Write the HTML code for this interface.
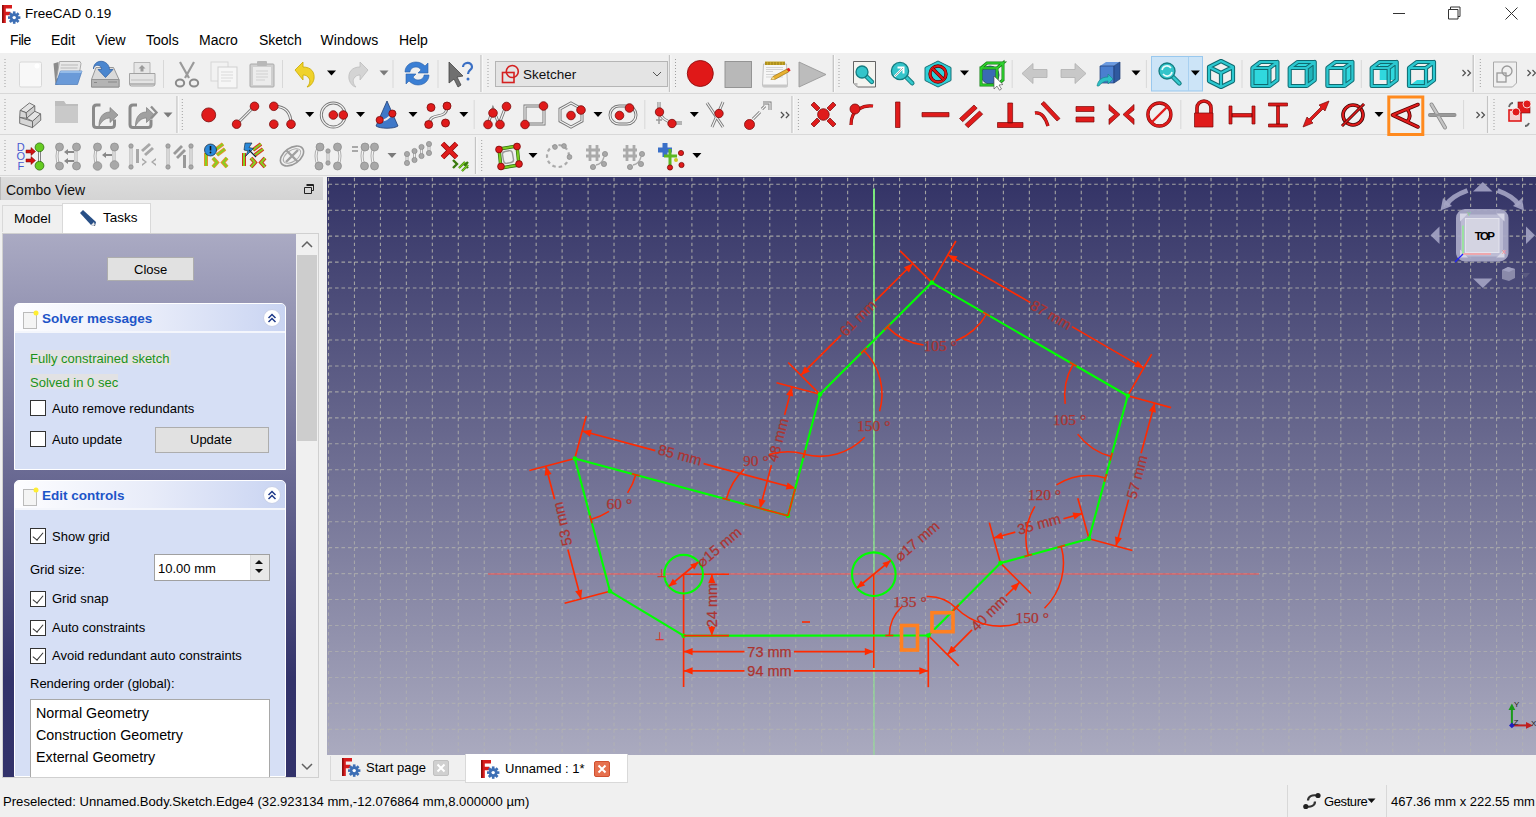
<!DOCTYPE html>
<html><head><meta charset="utf-8">
<style>
*{margin:0;padding:0;box-sizing:border-box}
html,body{width:1536px;height:817px;overflow:hidden;background:#f0f0f0;font-family:"Liberation Sans",sans-serif;font-size:13px;color:#000}
.a{position:absolute}
.t{position:absolute;white-space:nowrap;line-height:1}
#title{left:0;top:0;width:1536px;height:30px;background:#fff}
#menu{left:0;top:30px;width:1536px;height:23px;background:#fff}
#tb{left:0;top:53px;width:1536px;height:124px;background:#f0f0f0}
#view{left:327px;top:177px;width:1209px;height:578px}
.cb{position:absolute;width:16px;height:16px;background:#fff;border:1px solid #333}
.chk::after{content:"";position:absolute;left:4px;top:1px;width:5px;height:9px;border:solid #333;border-width:0 1.3px 1.3px 0;transform:rotate(40deg)}
.btn{position:absolute;background:#e1e1e1;border:1px solid #adadad;text-align:center}
</style></head><body>
<div id="title" class="a">
  <svg class="a" style="left:1px;top:4px" width="20" height="20" viewBox="0 0 20 20"><path d="M1 1h10v3.6H4.8v3.2h4.6v3.4H4.8V19H1z" fill="#d61c1c"/><path d="M1 1h1.6v18H1z" fill="#8e0c0c"/><g transform="translate(13.2,13.6)" fill="#3d6fb5"><circle r="4.4"/><rect x="-1.3" y="-6.2" width="2.6" height="12.4"/><rect x="-6.2" y="-1.3" width="12.4" height="2.6"/><rect x="-1.3" y="-6.2" width="2.6" height="12.4" transform="rotate(45)"/><rect x="-1.3" y="-6.2" width="2.6" height="12.4" transform="rotate(-45)"/><circle r="1.7" fill="#fff"/></g></svg>
  <div class="t" style="left:25px;top:7px;font-size:13.5px;color:#000">FreeCAD 0.19</div>
  <svg class="a" style="left:1380px;top:0" width="156" height="28">
    <path d="M13 13.5h12" stroke="#333" stroke-width="1"/>
    <path d="M68.5 9.5h9.5v9.5h-9.5z M70.5 9.5v-2.5h9.5v9.5h-2" stroke="#333" stroke-width="1" fill="none"/>
    <path d="M125.5 7.5l12 12M137.5 7.5l-12 12" stroke="#333" stroke-width="1"/>
  </svg>
</div>
<div id="menu" class="a">
  <div class="t" style="left:10px;top:3.3px;font-size:14px;letter-spacing:-0.4px">File</div>
  <div class="t" style="left:51px;top:3.3px;font-size:14px">Edit</div>
  <div class="t" style="left:95.5px;top:3.3px;font-size:14px">View</div>
  <div class="t" style="left:146px;top:3.3px;font-size:14px">Tools</div>
  <div class="t" style="left:199px;top:3.3px;font-size:14px">Macro</div>
  <div class="t" style="left:259px;top:3.3px;font-size:14px">Sketch</div>
  <div class="t" style="left:320.5px;top:3.3px;font-size:14px;letter-spacing:0.15px">Windows</div>
  <div class="t" style="left:399px;top:3.3px;font-size:14px">Help</div>
</div>
<div id="tb" class="a">
  <div class="a" style="left:0;top:40px;width:1536px;height:1px;background:#d8d8d8"></div>
  <div class="a" style="left:0;top:81px;width:1536px;height:1px;background:#d8d8d8"></div>
  <div class="a" style="left:0;top:122px;width:1536px;height:1px;background:#d8d8d8"></div>
</div>
<svg class="a" style="left:0;top:53px" width="1536" height="124" viewBox="0 53 1536 124"><line x1="5" y1="59" x2="5" y2="89" stroke="#a0a0a0" stroke-width="1" stroke-dasharray="1 2"/>
<rect x="19.5" y="62" width="22" height="25" rx="1.5" fill="#f8f8f8" stroke="#d8d8d8"/><circle cx="37" cy="66" r="2.5" fill="#fff"/>
<path d="M53.5 63.5l5 -1.5v22.5l-3 0.5z" fill="#8c8c8c"/><path d="M59.5 61.5h20.5l1 2-2.5 15h-22z" fill="#e8e8e8" stroke="#9a9a9a" stroke-width="0.8"/><path d="M61 65h17M60.5 68h17" stroke="#b8b8b8" stroke-width="1"/>
<path d="M60.5 71h21.5l-4.5 13.5H55.5z" fill="#6a9ad8" stroke="#4a78b8" stroke-width="0.7"/><path d="M60.5 71h21.5l-0.6 2H59.9z" fill="#94bbe8"/>
<path d="M96 67.5h17.5l5.5 12v7.5H91.5v-7.5z" fill="#dadada" stroke="#8e8e8e" stroke-width="0.9"/><path d="M91.5 79.5h27.5v7.5H91.5z" fill="#b4b4b4" stroke="#8e8e8e" stroke-width="0.9"/><path d="M108 82h9M94 82.5h3" stroke="#888" stroke-width="1"/>
<path d="M93.5 69c0-6 5-8.5 9.5-7.5 4 1 6.5 4.5 6.5 8h3.5l-7.5 8-7.5-8h3.5c0-2.5-1.5-4-3.5-4.2-2.5-.3-4.5 1.5-4.5 3.7z" fill="#4a86cf" stroke="#2a5a9e" stroke-width="0.7"/>
<path d="M134 62.5h16v11h-16z" fill="#e6e6e6" stroke="#a8a8a8" stroke-width="0.8"/><path d="M142 65l3.5 3.5h-2v3h-3v-3h-2z" fill="#9a9a9a"/><path d="M129.5 73.5h25.5v10.5q0 2-2 2h-21.5q-2 0-2-2z" fill="#e4e4e4" stroke="#9c9c9c" stroke-width="0.9"/><path d="M131 80h22" stroke="#c4c4c4" stroke-width="1.2"/><path d="M130 84h25" stroke="#aaa" stroke-width="1.5"/>
<line x1="163.5" y1="60" x2="163.5" y2="88" stroke="#d8d8d8" stroke-width="1"/>
<path d="M180 62l9 16M194 62l-9 16" stroke="#9a9a9a" stroke-width="2.2"/><ellipse cx="180" cy="83" rx="4.2" ry="3.5" fill="none" stroke="#8a8a8a" stroke-width="2"/><ellipse cx="194" cy="83" rx="4.2" ry="3.5" fill="none" stroke="#8a8a8a" stroke-width="2"/>
<rect x="211" y="62" width="17" height="19" fill="#f2f2f2" stroke="#d6d6d6"/><rect x="218" y="67" width="19" height="21" fill="#f6f6f6" stroke="#cfcfcf"/><path d="M221 72h12M221 75h12M221 78h12M221 81h10" stroke="#dadada"/>
<rect x="250" y="64" width="24" height="23" rx="1" fill="#cfcfcf" stroke="#aaa"/><rect x="253" y="67" width="18" height="18" fill="#ececec"/><rect x="257" y="61" width="10" height="5" rx="1" fill="#b8b8b8"/><path d="M256 71h12M256 74h12M256 77h12M256 80h9" stroke="#d0d0d0"/>
<line x1="282.5" y1="60" x2="282.5" y2="88" stroke="#d8d8d8" stroke-width="1"/>
<path d="M295 70l8-8v5c8 0 12 5 11 12-1 5-5 8-7 8 3-3 4-7 1-10-2-2-4-2-5-2v5z" fill="#f0d22a" stroke="#c8a800" stroke-width="0.8"/>
<polygon points="327.0,70.5 336.0,70.5 331.5,75.5" fill="#000"/>
<path d="M368 70l-8-8v5c-8 0-12 5-11 12 1 5 5 8 7 8-3-3-4-7-1-10 2-2 4-2 5-2v5z" fill="#d4d4d4" stroke="#bdbdbd" stroke-width="0.8"/>
<polygon points="379.5,70.5 388.5,70.5 384,75.5" fill="#7a7a7a"/>
<line x1="393" y1="60" x2="393" y2="88" stroke="#d8d8d8" stroke-width="1"/>
<path d="M405 72c0-6 5-10 11-10 4 0 7 2 9 4l3-3v10h-10l3-3c-1-2-3-3-5-3-4 0-6 3-6 5z" fill="#3b7fd4" stroke="#2a5fa8" stroke-width="0.6"/><path d="M429 75c0 6-5 10-11 10-4 0-7-2-9-4l-3 3V74h10l-3 3c1 2 3 3 5 3 4 0 6-3 6-5z" fill="#3b7fd4" stroke="#2a5fa8" stroke-width="0.6"/>
<line x1="438" y1="60" x2="438" y2="88" stroke="#d8d8d8" stroke-width="1"/>
<path d="M449 62l14 14-6 1 4 8-3 2-4-8-5 4z" fill="#707070" stroke="#444" stroke-width="0.8"/><path d="M463 67c0-5 9-6 9 0 0 3-4 3-4 7" fill="none" stroke="#3a6fc4" stroke-width="2.2"/><circle cx="468" cy="79" r="1.5" fill="#3a6fc4"/>
<line x1="481" y1="55" x2="481" y2="92" stroke="#c4c4c4" stroke-width="1.3"/><line x1="482.3" y1="55" x2="482.3" y2="92" stroke="#fafafa" stroke-width="1"/>
<line x1="488" y1="59" x2="488" y2="89" stroke="#a0a0a0" stroke-width="1" stroke-dasharray="1 2"/>
<rect x="495.5" y="61.5" width="172" height="25" fill="#e4e4e4" stroke="#b5b5b5"/>
<rect x="502.5" y="72.5" width="11.5" height="10" fill="none" stroke="#d42020" stroke-width="1.6"/><circle cx="512.3" cy="71.5" r="6" fill="none" stroke="#d42020" stroke-width="1.6"/>
<text x="523" y="78.5" font-size="13.5" font-family="Liberation Sans" fill="#111">Sketcher</text>
<path d="M653 72l4 4 4-4" fill="none" stroke="#555" stroke-width="1"/>
<line x1="669.5" y1="55" x2="669.5" y2="92" stroke="#c4c4c4" stroke-width="1.3"/><line x1="670.8" y1="55" x2="670.8" y2="92" stroke="#fafafa" stroke-width="1"/>
<line x1="675.5" y1="59" x2="675.5" y2="89" stroke="#a0a0a0" stroke-width="1" stroke-dasharray="1 2"/>
<circle cx="700.3" cy="73.5" r="13" fill="#e01818" stroke="#8e0c0c" stroke-width="0.9"/>
<rect x="725" y="61.5" width="26.5" height="26" fill="#b8b8b8" stroke="#8e8e8e" stroke-width="0.9"/>
<path d="M763.5 64h23l1 21.5q0 1.5-1.5 1.5h-22q-1.5 0-1.5-1.5z" fill="#f6f6f6" stroke="#b4b4b4" stroke-width="0.8"/><path d="M763 84.5h24.5v2.5h-24.5z" fill="#c8c8c8"/><path d="M765 61.5h20v3.5h-20z" fill="#c8a828"/><path d="M766 62v3M769 62v3M772 62v3M775 62v3M778 62v3M781 62v3M784 62v3" stroke="#8a7010" stroke-width="0.8"/><path d="M766 67.5h17M766 69.5h17M766 71.5h7M766 74.5h17M766 77h17" stroke="#d0d0d0" stroke-width="0.9"/>
<path d="M771 79.5l2-3 14-7.5 1.8 2.8-14 7.7z" fill="#e8b030" stroke="#8a6000" stroke-width="0.6"/><path d="M786.5 69l2.5-1.2 1.6 2.8-1.8 1.2z" fill="#e02020"/><path d="M771 79.5l2-3 1.8 2.9z" fill="#f0d890"/>
<path d="M799 62v25l27-12.5z" fill="#bcbcbc" stroke="#9a9a9a" stroke-width="0.9"/>
<line x1="833.3" y1="55" x2="833.3" y2="92" stroke="#c4c4c4" stroke-width="1.3"/><line x1="834.5999999999999" y1="55" x2="834.5999999999999" y2="92" stroke="#fafafa" stroke-width="1"/>
<line x1="839" y1="59" x2="839" y2="89" stroke="#a0a0a0" stroke-width="1" stroke-dasharray="1 2"/>
<path d="M853.5 61.5h22v25.5h-18l-4-4z" fill="#f4f4f0" stroke="#555" stroke-width="0.9"/><path d="M853.5 83l4 4v-4z" fill="#bbb"/>
<line x1="865.3" y1="75.3" x2="871.8" y2="81.8" stroke="#137c80" stroke-width="4.6" stroke-linecap="round"/><line x1="865.3" y1="75.3" x2="871.8" y2="81.8" stroke="#34c8cc" stroke-width="2.6" stroke-linecap="round"/><circle cx="862" cy="72" r="6" fill="#34c4ca" stroke="#137c80" stroke-width="1.3"/>
<line x1="904.73" y1="75.73" x2="912.23" y2="83.23" stroke="#137c80" stroke-width="4.6" stroke-linecap="round"/><line x1="904.73" y1="75.73" x2="912.23" y2="83.23" stroke="#34c8cc" stroke-width="2.6" stroke-linecap="round"/><circle cx="900" cy="71" r="8.6" fill="#34c4ca" stroke="#137c80" stroke-width="1.3"/><path d="M894.5 76.5l8.5-8.5M897.5 67.5h6v6" stroke="#fff" stroke-width="2" fill="none"/><path d="M894.5 76.5l8.5-8.5" stroke="#555" stroke-width="0.5"/>
<polygon points="938,61 951,67.5 951,80.5 938,87 925,80.5 925,67.5" fill="#30d0d8" stroke="#1a6f74" stroke-width="1"/><circle cx="938" cy="74" r="8" fill="none" stroke="#5a0000" stroke-width="3.4"/><circle cx="938" cy="74" r="8" fill="none" stroke="#e01818" stroke-width="2.2"/><line x1="932.5" y1="68.5" x2="943.5" y2="79.5" stroke="#5a0000" stroke-width="3.4"/><line x1="932.5" y1="68.5" x2="943.5" y2="79.5" stroke="#e01818" stroke-width="2.2"/>
<polygon points="960.0,70.5 969.0,70.5 964.5,75.5" fill="#000"/>
<circle cx="990" cy="75" r="9" fill="#3a6ab4" stroke="#1d3a70" stroke-width="0.8"/><path d="M981 68h16v17h-16z M981 68l6-5h16l-6 5M997 68l6-5v17l-6 5" fill="none" stroke="#168016" stroke-width="3"/><path d="M981 68h16v17h-16z M981 68l6-5h16l-6 5M997 68l6-5v17l-6 5" fill="none" stroke="#2ed42e" stroke-width="1.6"/><path d="M994 76l9 8.5-4 0.5 2.5 4-2 1.2-2.5-4-3 2.8z" fill="#fff" stroke="#444" stroke-width="0.6"/>
<line x1="1012.2" y1="60" x2="1012.2" y2="88" stroke="#d8d8d8" stroke-width="1"/>
<path d="M1022 73.5l11-10v6h14v8h-14v6z" fill="#c8c8c8" stroke="#b0b0b0" stroke-width="0.8"/>
<path d="M1086 73.5l-11-10v6h-14v8h14v6z" fill="#c8c8c8" stroke="#b0b0b0" stroke-width="0.8"/>
<path d="M1100 66l6-4h14l-6 4z" fill="#6c9be0"/><path d="M1100 66h14v17h-14z" fill="#4a7fcf" stroke="#1f3d73" stroke-width="0.7"/><path d="M1114 66l6-4v17l-6 4z" fill="#2f5aa0" stroke="#1f3d73" stroke-width="0.7"/><path d="M1097 86c1-6 5-9 11-9v-3l5 5-5 5v-3c-4 0-7 2-9 5z" fill="#2cc0c6" stroke="#1a7f84" stroke-width="0.6"/>
<polygon points="1131.5,70.5 1140.5,70.5 1136,75.5" fill="#000"/>
<line x1="1146.4" y1="60" x2="1146.4" y2="88" stroke="#d8d8d8" stroke-width="1"/>
<rect x="1151.5" y="56.5" width="51" height="34.5" fill="#cce4f7" stroke="#99c8ee"/><line x1="1188.5" y1="57" x2="1188.5" y2="91" stroke="#a8d0f0"/>
<line x1="1171.4" y1="75.4" x2="1179.4" y2="83.4" stroke="#137c80" stroke-width="4.6" stroke-linecap="round"/><line x1="1171.4" y1="75.4" x2="1179.4" y2="83.4" stroke="#34c8cc" stroke-width="2.6" stroke-linecap="round"/><circle cx="1167" cy="71" r="8" fill="#34c4ca" stroke="#137c80" stroke-width="1.3"/><path d="M1162 70a5 5 0 0 1 9-2M1172 72a5 5 0 0 1-9 2" stroke="#eafcfc" stroke-width="1.6" fill="none"/>
<polygon points="1190.9,70.5 1199.9,70.5 1195.4,75.5" fill="#000"/>
<path d="M1221 61l12 6v14l-12 6-12-6V67z M1209 67l12 6 12-6M1221 73v14" fill="none" stroke="#0f6a70" stroke-width="4.2" stroke-linejoin="round"/><path d="M1221 61l12 6v14l-12 6-12-6V67z M1209 67l12 6 12-6M1221 73v14" fill="none" stroke="#2cc8d0" stroke-width="2.2" stroke-linejoin="round"/>
<line x1="1242" y1="60" x2="1242" y2="88" stroke="#d8d8d8" stroke-width="1"/>
<path d="M1252.4 68h17v18h-17z" fill="#30d8de"/>
<path d="M1252.4 68h17v18h-17z M1252.4 68l8-6h17l-8 6 M1269.4 68l8-6v18l-8 6" fill="none" stroke="#0f6a70" stroke-width="4.2" stroke-linejoin="round"/>
<path d="M1252.4 68h17v18h-17z M1252.4 68l8-6h17l-8 6 M1269.4 68l8-6v18l-8 6" fill="none" stroke="#2cc8d0" stroke-width="2.2" stroke-linejoin="round"/>
<path d="M1289.7 68l8-6h17l-8 6z" fill="#30d8de"/><path d="M1306.7 68l8-6v18l-8 6z" fill="#22b4ba"/>
<path d="M1289.7 68h17v18h-17z M1289.7 68l8-6h17l-8 6 M1306.7 68l8-6v18l-8 6" fill="none" stroke="#0f6a70" stroke-width="4.2" stroke-linejoin="round"/>
<path d="M1289.7 68h17v18h-17z M1289.7 68l8-6h17l-8 6 M1306.7 68l8-6v18l-8 6" fill="none" stroke="#2cc8d0" stroke-width="2.2" stroke-linejoin="round"/>
<path d="M1344.4 68l8-6v18l-8 6z" fill="#30d8de"/><path d="M1327.4 68h17v18h-17z" fill="#30d8de" fill-opacity="0.0"/>
<path d="M1327.4 68h17v18h-17z M1327.4 68l8-6h17l-8 6 M1344.4 68l8-6v18l-8 6" fill="none" stroke="#0f6a70" stroke-width="4.2" stroke-linejoin="round"/>
<path d="M1327.4 68h17v18h-17z M1327.4 68l8-6h17l-8 6 M1344.4 68l8-6v18l-8 6" fill="none" stroke="#2cc8d0" stroke-width="2.2" stroke-linejoin="round"/>
<line x1="1361.3" y1="60" x2="1361.3" y2="88" stroke="#d8d8d8" stroke-width="1"/>
<path d="M1379.7 62h17v18h-17z" fill="#30d8de"/>
<path d="M1371.7 68h17v18h-17z M1371.7 68l8-6h17l-8 6 M1388.7 68l8-6v18l-8 6" fill="none" stroke="#0f6a70" stroke-width="4.2" stroke-linejoin="round"/>
<path d="M1371.7 68h17v18h-17z M1371.7 68l8-6h17l-8 6 M1388.7 68l8-6v18l-8 6" fill="none" stroke="#2cc8d0" stroke-width="2.2" stroke-linejoin="round"/>
<path d="M1409 86l8-6h17l-8 6z" fill="#30d8de"/>
<path d="M1409 68h17v18h-17z M1409 68l8-6h17l-8 6 M1426 68l8-6v18l-8 6" fill="none" stroke="#0f6a70" stroke-width="4.2" stroke-linejoin="round"/>
<path d="M1409 68h17v18h-17z M1409 68l8-6h17l-8 6 M1426 68l8-6v18l-8 6" fill="none" stroke="#2cc8d0" stroke-width="2.2" stroke-linejoin="round"/>
<path d="M1462.5 70l3 3-3 3M1467.5 70l3 3-3 3" fill="none" stroke="#505050" stroke-width="1.2"/>
<line x1="1473.2" y1="55" x2="1473.2" y2="92" stroke="#c4c4c4" stroke-width="1.3"/><line x1="1474.5" y1="55" x2="1474.5" y2="92" stroke="#fafafa" stroke-width="1"/>
<line x1="1480.3" y1="59" x2="1480.3" y2="89" stroke="#a0a0a0" stroke-width="1" stroke-dasharray="1 2"/>
<path d="M1493.5 62h23v21l-4 4h-19z" fill="#f0f0f0" stroke="#aaa"/><rect x="1497" y="73" width="9" height="9" fill="none" stroke="#999" stroke-width="1.3"/><circle cx="1507" cy="71" r="5" fill="none" stroke="#999" stroke-width="1.3"/>
<path d="M1527.5 70l3 3-3 3M1532.5 70l3 3-3 3" fill="none" stroke="#505050" stroke-width="1.2"/>
<line x1="5" y1="99" x2="5" y2="130" stroke="#a0a0a0" stroke-width="1" stroke-dasharray="1 2"/>
<g stroke="#666" stroke-width="0.9" stroke-linejoin="round"><path d="M29.4 103L34.8 105.8L26.2 112.7L20.1 110.4z" fill="#e4e4e4"/><path d="M20.1 110.4L26.2 112.7L26.7 118.3L19.7 117.4z" fill="#d6d6d6"/><path d="M34.8 105.8L34.8 111.3L26.7 118.3L26.2 112.7z" fill="#cfcfcf"/><path d="M26.7 118.3L34.8 111.3L40.6 113.9L32.5 121.3z" fill="#e4e4e4"/><path d="M19.7 117.4L32.5 121.3L32.5 127.6L19.7 123.4z" fill="#d6d6d6"/><path d="M32.5 121.3L40.6 113.9L40.8 120.2L32.5 127.6z" fill="#cfcfcf"/></g>
<path d="M55 101h9l2 3h12v19H55z" fill="#bdbdbd"/><path d="M55 106h23v17H55z" fill="#c9c9c9"/>
<path d="M100.5 105.0h-4q-3 0-3 3v16.5q0 3 3 3h15q3 0 3-3v-5" fill="none" stroke="#8a8a8a" stroke-width="3"/><path d="M99.0 126.0c0-9 4-14 11-14v-4.5l8 7.5-8 7.5v-4.5c-5 0-8 3-11 8z" fill="#a0a0a0" stroke="#7e7e7e" stroke-width="0.7"/>
<path d="M137 105.0h-4q-3 0-3 3v16.5q0 3 3 3h15q3 0 3-3v-5" fill="none" stroke="#8a8a8a" stroke-width="3"/><path d="M135.5 126.0c0-9 4-14 11-14v-4.5l8 7.5-8 7.5v-4.5c-5 0-8 3-11 8z" fill="#a0a0a0" stroke="#7e7e7e" stroke-width="0.7"/>
<path d="M151 106.5l5.5 6-5.5 6" fill="none" stroke="#8e8e8e" stroke-width="2.4"/>
<polygon points="163.5,112.5 172.5,112.5 168,117.5" fill="#7a7a7a"/>
<line x1="177" y1="96" x2="177" y2="133" stroke="#c4c4c4" stroke-width="1.3"/><line x1="178.3" y1="96" x2="178.3" y2="133" stroke="#fafafa" stroke-width="1"/>
<line x1="182.3" y1="99" x2="182.3" y2="130" stroke="#a0a0a0" stroke-width="1" stroke-dasharray="1 2"/>
<circle cx="208.7" cy="114.9" r="7" fill="#e01b1b" stroke="#7a0a0a" stroke-width="0.8"/>
<path d="M236.6 124.2L254.5 106.3" fill="none" stroke="#777" stroke-width="3"/><path d="M236.6 124.2L254.5 106.3" fill="none" stroke="#f4f4f4" stroke-width="1.2"/>
<circle cx="236.6" cy="124.2" r="4.3" fill="#e01b1b" stroke="#7a0a0a" stroke-width="0.8"/>
<circle cx="254.5" cy="106.3" r="4.3" fill="#e01b1b" stroke="#7a0a0a" stroke-width="0.8"/>
<path d="M273.8 106.3Q291 106 291 124.2" fill="none" stroke="#777" stroke-width="3"/><path d="M273.8 106.3Q291 106 291 124.2" fill="none" stroke="#f4f4f4" stroke-width="1.2"/>
<circle cx="273.8" cy="106.3" r="4.3" fill="#e01b1b" stroke="#7a0a0a" stroke-width="0.8"/>
<circle cx="273.8" cy="124.2" r="4.3" fill="#e01b1b" stroke="#7a0a0a" stroke-width="0.8"/>
<circle cx="291" cy="124.2" r="4.3" fill="#e01b1b" stroke="#7a0a0a" stroke-width="0.8"/>
<polygon points="305.2,112.0 314.2,112.0 309.7,117.0" fill="#000"/>
<circle cx="333.3" cy="115" r="12" fill="none" stroke="#777" stroke-width="3"/><circle cx="333.3" cy="115" r="12" fill="none" stroke="#f4f4f4" stroke-width="1.2"/>
<circle cx="333.3" cy="115" r="4.3" fill="#e01b1b" stroke="#7a0a0a" stroke-width="0.8"/>
<circle cx="343.3" cy="115" r="4.3" fill="#e01b1b" stroke="#7a0a0a" stroke-width="0.8"/>
<polygon points="356.0,112.0 365.0,112.0 360.5,117.0" fill="#000"/>
<path d="M387 101l-11 25c4 3 18 3 22 0z" fill="#3f78c8" stroke="#1f3d73" stroke-width="0.8"/><path d="M379.7 120q6 2 12.7-6.4" stroke="#eee" stroke-width="2" fill="none"/>
<circle cx="379.7" cy="120" r="3.6" fill="#e01b1b" stroke="#7a0a0a" stroke-width="0.8"/>
<circle cx="392.4" cy="113.6" r="3.6" fill="#e01b1b" stroke="#7a0a0a" stroke-width="0.8"/>
<polygon points="408.5,112.0 417.5,112.0 413,117.0" fill="#000"/>
<path d="M428.7 124.2C431 110 446 122 447.3 106.3" fill="none" stroke="#777" stroke-width="3"/><path d="M428.7 124.2C431 110 446 122 447.3 106.3" fill="none" stroke="#f4f4f4" stroke-width="1.2"/>
<circle cx="431" cy="107.5" r="4" fill="#e01b1b" stroke="#7a0a0a" stroke-width="0.8"/>
<circle cx="447" cy="106" r="4" fill="#e01b1b" stroke="#7a0a0a" stroke-width="0.8"/>
<circle cx="428.7" cy="124.5" r="4" fill="#e01b1b" stroke="#7a0a0a" stroke-width="0.8"/>
<circle cx="445.5" cy="123" r="4" fill="#e01b1b" stroke="#7a0a0a" stroke-width="0.8"/>
<polygon points="459.3,112.0 468.3,112.0 463.8,117.0" fill="#000"/>
<line x1="474.2" y1="100" x2="474.2" y2="129" stroke="#d8d8d8" stroke-width="1"/>
<path d="M488 124l5-15 6 15 7-18" fill="none" stroke="#777" stroke-width="3"/><path d="M488 124l5-15 6 15 7-18" fill="none" stroke="#f4f4f4" stroke-width="1.2"/>
<circle cx="488" cy="124.5" r="4.3" fill="#e01b1b" stroke="#7a0a0a" stroke-width="0.8"/>
<circle cx="493" cy="113" r="4.3" fill="#e01b1b" stroke="#7a0a0a" stroke-width="0.8"/>
<circle cx="500" cy="124.5" r="4.3" fill="#e01b1b" stroke="#7a0a0a" stroke-width="0.8"/>
<circle cx="506.5" cy="106.5" r="4.3" fill="#e01b1b" stroke="#7a0a0a" stroke-width="0.8"/>
<path d="M525 124V106h19v18z" fill="none" stroke="#777" stroke-width="3"/><path d="M525 124V106h19v18z" fill="none" stroke="#f4f4f4" stroke-width="1.2"/>
<circle cx="525" cy="124.5" r="4.3" fill="#e01b1b" stroke="#7a0a0a" stroke-width="0.8"/>
<circle cx="543.5" cy="106" r="4.3" fill="#e01b1b" stroke="#7a0a0a" stroke-width="0.8"/>
<polygon points="571,103 582,109 582,121 571,127 560,121 560,109" fill="none" stroke="#777" stroke-width="3"/><polygon points="571,103 582,109 582,121 571,127 560,121 560,109" fill="none" stroke="#f4f4f4" stroke-width="1.2"/>
<circle cx="571" cy="115.5" r="4.3" fill="#e01b1b" stroke="#7a0a0a" stroke-width="0.8"/>
<circle cx="581" cy="110" r="4.3" fill="#e01b1b" stroke="#7a0a0a" stroke-width="0.8"/>
<polygon points="593.5,112.0 602.5,112.0 598,117.0" fill="#000"/>
<rect x="610" y="106" width="26" height="18" rx="9" fill="none" stroke="#777" stroke-width="3"/><rect x="610" y="106" width="26" height="18" rx="9" fill="none" stroke="#f4f4f4" stroke-width="1.2"/>
<circle cx="619.5" cy="115.5" r="4.3" fill="#e01b1b" stroke="#7a0a0a" stroke-width="0.8"/>
<circle cx="629.5" cy="108" r="4.3" fill="#e01b1b" stroke="#7a0a0a" stroke-width="0.8"/>
<line x1="644.8" y1="100" x2="644.8" y2="129" stroke="#d8d8d8" stroke-width="1"/>
<path d="M659 102v9q2 9 14 12h9" fill="none" stroke="#777" stroke-width="3"/><path d="M659 102v9q2 9 14 12h9" fill="none" stroke="#f4f4f4" stroke-width="1.2"/>
<circle cx="659.5" cy="112" r="4.2" fill="#e01b1b" stroke="#7a0a0a" stroke-width="0.8"/>
<circle cx="672" cy="123.5" r="4.2" fill="#e01b1b" stroke="#7a0a0a" stroke-width="0.8"/>
<path d="M656 120h6M659 117v7" stroke="#999" stroke-width="1.5"/>
<polygon points="689.8,112.0 698.8,112.0 694.3,117.0" fill="#000"/>
<path d="M712 127l11-25M707 103l16 24" fill="none" stroke="#777" stroke-width="3"/><path d="M712 127l11-25M707 103l16 24" fill="none" stroke="#f4f4f4" stroke-width="1.2"/>
<circle cx="719" cy="113.5" r="4.2" fill="#e01b1b" stroke="#7a0a0a" stroke-width="0.8"/>
<path d="M753 119l7-7M762 109l3-3M763 103h7v7" fill="none" stroke="#777" stroke-width="3"/><path d="M753 119l7-7M762 109l3-3M763 103h7v7" fill="none" stroke="#f4f4f4" stroke-width="1.2"/>
<circle cx="749.5" cy="124.5" r="5" fill="#e01b1b" stroke="#7a0a0a" stroke-width="0.8"/>
<path d="M780.9 112l3 3-3 3M785.9 112l3 3-3 3" fill="none" stroke="#505050" stroke-width="1.2"/>
<line x1="792" y1="96" x2="792" y2="133" stroke="#c4c4c4" stroke-width="1.3"/><line x1="793.3" y1="96" x2="793.3" y2="133" stroke="#fafafa" stroke-width="1"/>
<line x1="798.4" y1="99" x2="798.4" y2="130" stroke="#a0a0a0" stroke-width="1" stroke-dasharray="1 2"/>
<path d="M811 105l3-3 6 6-3 3z M836 105l-3-3-6 6 3 3z M811 124l3 3 6-6-3-3z M836 124l-3 3-6-6 3-3z" fill="#e01b1b" stroke="#7a0a0a" stroke-width="0.7"/>
<circle cx="823.4" cy="114.5" r="5.8" fill="#e01b1b" stroke="#7a0a0a" stroke-width="0.8"/>
<path d="M851 125q0-12 8-16q6-4 14-3" fill="none" stroke="#7a0a0a" stroke-width="3.2"/><path d="M851 125q0-12 8-16q6-4 14-3" fill="none" stroke="#e01b1b" stroke-width="2.2"/>
<circle cx="855" cy="109" r="5" fill="#e01b1b" stroke="#7a0a0a" stroke-width="0.8"/>
<path d="M895.5 102h4.5v25.5h-4.5z" fill="#e01b1b" stroke="#7a0a0a" stroke-width="0.7"/>
<path d="M922 112.5h27v4.3h-27z" fill="#e01b1b" stroke="#7a0a0a" stroke-width="0.7"/>
<path d="M959.5 118.5l14.5-13.5 3.2 3.2-14.5 13.5z M965 124.5l14.5-13.5 3.2 3.2-14.5 13.5z" fill="#e01b1b" stroke="#7a0a0a" stroke-width="0.7"/>
<path d="M997.5 122.5h25.5v5h-25.5z M1007.8 103h4.8v20h-4.8z" fill="#e01b1b" stroke="#7a0a0a" stroke-width="0.7"/>
<path d="M1035 113c6-1 10 3 13 13" fill="none" stroke="#7a0a0a" stroke-width="3.3"/><path d="M1035 113c6-1 10 3 13 13" fill="none" stroke="#e01b1b" stroke-width="2.2"/>
<path d="M1041 104l3-2.5 16 17-3 2.5z" fill="#e01b1b" stroke="#7a0a0a" stroke-width="0.7"/>
<path d="M1076 106.5h18v5h-18z M1076 117h18v5h-18z" fill="#e01b1b" stroke="#7a0a0a" stroke-width="0.7"/>
<path d="M1109 104.5l11 10-11 10v-5.5l5.5-4.5-5.5-4.5z M1134 104.5l-11 10 11 10v-5.5l-5.5-4.5 5.5-4.5z" fill="#e01b1b" stroke="#7a0a0a" stroke-width="0.7"/>
<circle cx="1159.4" cy="114.5" r="11.5" fill="none" stroke="#7a0a0a" stroke-width="3.4"/><circle cx="1159.4" cy="114.5" r="11.5" fill="none" stroke="#e01b1b" stroke-width="2.2"/><line x1="1151" y1="123" x2="1168" y2="106" stroke="#e01b1b" stroke-width="2.4"/>
<line x1="1180.8" y1="100" x2="1180.8" y2="129" stroke="#d8d8d8" stroke-width="1"/>
<path d="M1197 113v-5a7 7 0 0 1 14 0v5" fill="none" stroke="#7a0a0a" stroke-width="3.6"/><path d="M1197 113v-5a7 7 0 0 1 14 0v5" fill="none" stroke="#e01b1b" stroke-width="2.2"/>
<path d="M1194.5 113h18.5v14h-18.5z" fill="#e01b1b" stroke="#7a0a0a" stroke-width="0.7"/>
<path d="M1229 106h3v18h-3z M1252 106h3v18h-3z M1232 113.5h20v3.5h-20z" fill="#e01b1b" stroke="#7a0a0a" stroke-width="0.7"/>
<path d="M1268.5 103h19v3h-19z M1268.5 124h19v3h-19z M1276.5 106h3v18h-3z" fill="#e01b1b" stroke="#7a0a0a" stroke-width="0.7"/>
<path d="M1303 127l4-10 2 2 12-12-2-2 10-4-4 10-2-2-12 12 2 2z" fill="#e01b1b" stroke="#7a0a0a" stroke-width="0.7"/>
<circle cx="1353" cy="115" r="10" fill="none" stroke="#3a0000" stroke-width="3.6"/><circle cx="1353" cy="115" r="10" fill="none" stroke="#e01b1b" stroke-width="2"/><line x1="1342" y1="126" x2="1364" y2="104" stroke="#3a0000" stroke-width="3"/><line x1="1342" y1="126" x2="1364" y2="104" stroke="#e01b1b" stroke-width="1.6"/>
<polygon points="1374.5,112.0 1383.5,112.0 1379,117.0" fill="#000"/>
<rect x="1388.8" y="97" width="34" height="37.5" fill="none" stroke="#ff8a1e" stroke-width="3"/>
<path d="M1418 104.5L1392.5 115L1418 127M1407.5 109.5Q1412 115.5 1407.5 121.5" fill="none" stroke="#5a0000" stroke-width="3.6" stroke-linecap="round" stroke-linejoin="round"/><path d="M1418 104.5L1392.5 115L1418 127M1407.5 109.5Q1412 115.5 1407.5 121.5" fill="none" stroke="#e01b1b" stroke-width="2" stroke-linecap="round" stroke-linejoin="round"/>
<path d="M1431.5 104.5L1445 127.5M1430 115h24.5" fill="none" stroke="#8a8a8a" stroke-width="4" stroke-linecap="round"/><path d="M1431.5 104.5L1445 127.5" fill="none" stroke="#c4c4c4" stroke-width="2.4" stroke-linecap="round"/><path d="M1430 115h24.5" fill="none" stroke="#9a9a9a" stroke-width="2.6" stroke-linecap="round"/>
<line x1="1463.6" y1="100" x2="1463.6" y2="129" stroke="#d8d8d8" stroke-width="1"/>
<path d="M1476.5 112l3 3-3 3M1481.5 112l3 3-3 3" fill="none" stroke="#505050" stroke-width="1.2"/>
<line x1="1487.6" y1="96" x2="1487.6" y2="133" stroke="#c4c4c4" stroke-width="1.3"/><line x1="1488.8999999999999" y1="96" x2="1488.8999999999999" y2="133" stroke="#fafafa" stroke-width="1"/>
<line x1="1494" y1="99" x2="1494" y2="130" stroke="#a0a0a0" stroke-width="1" stroke-dasharray="1 2"/>
<rect x="1509" y="110" width="12" height="11" fill="#f4d0d0" stroke="#e01b1b" stroke-width="1.6"/><rect x="1518" y="102" width="12" height="11" fill="#e01b1b" stroke="#7a0a0a" stroke-width="0.6"/><circle cx="1527" cy="104" r="4" fill="#e01b1b" stroke="#fff" stroke-width="0.8"/><circle cx="1516" cy="112" r="4" fill="#e01b1b" stroke="#fff" stroke-width="0.8"/><path d="M1509 107q1-4 4-4M1529 123q-1 3-4 3" fill="none" stroke="#666" stroke-width="1.8"/>
<line x1="5" y1="140" x2="5" y2="171" stroke="#a0a0a0" stroke-width="1" stroke-dasharray="1 2"/>
<g font-family="Liberation Sans" font-size="11" fill="#4a5ad0" text-anchor="middle"><text x="20.8" y="151">D</text><text x="20.8" y="160">O</text><text x="20.8" y="169.5">F</text></g>
<path d="M26 150h5v-2.5l4.5 4-4.5 4v-2.5h-5z M26 159h5v-2.5l4.5 4-4.5 4v-2.5h-5z" fill="#d01010" stroke="#7a0000" stroke-width="0.5"/>
<path d="M39.5 147V166" fill="none" stroke="#777" stroke-width="3"/><path d="M39.5 147V166" fill="none" stroke="#f4f4f4" stroke-width="1.2"/>
<circle cx="39.5" cy="147.3" r="4.4" fill="#66cc22" stroke="#2e6e10" stroke-width="0.8"/><circle cx="39.5" cy="165.7" r="4.4" fill="#66cc22" stroke="#2e6e10" stroke-width="0.8"/>
<path d="M59 147q-4 9 0 19" fill="none" stroke="#aaa" stroke-width="3"/><path d="M59 147q-4 9 0 19" fill="none" stroke="#f4f4f4" stroke-width="1.2"/>
<path d="M76 147v19" fill="none" stroke="#aaa" stroke-width="3"/><path d="M76 147v19" fill="none" stroke="#f4f4f4" stroke-width="1.2"/>
<circle cx="59.5" cy="147" r="4" fill="#a8a8a8" stroke="#8a8a8a" stroke-width="0.7"/>
<circle cx="59.5" cy="166" r="4" fill="#a8a8a8" stroke="#8a8a8a" stroke-width="0.7"/>
<circle cx="76.5" cy="147" r="4" fill="#a8a8a8" stroke="#8a8a8a" stroke-width="0.7"/>
<circle cx="76.5" cy="166" r="4" fill="#a8a8a8" stroke="#8a8a8a" stroke-width="0.7"/>
<path d="M64 152l4-3v2h6v2h-6v2z" fill="#888"/>
<path d="M64 161l4-3v2h6v2h-6v2z" fill="#888"/>
<path d="M97 147q-4 9 0 19" fill="none" stroke="#aaa" stroke-width="3"/><path d="M97 147q-4 9 0 19" fill="none" stroke="#f4f4f4" stroke-width="1.2"/>
<path d="M114 147v19" fill="none" stroke="#aaa" stroke-width="3"/><path d="M114 147v19" fill="none" stroke="#f4f4f4" stroke-width="1.2"/>
<circle cx="97.5" cy="147" r="4" fill="#a8a8a8" stroke="#8a8a8a" stroke-width="0.7"/>
<circle cx="97.5" cy="166" r="4.3" fill="#a8a8a8" stroke="#8a8a8a" stroke-width="0.7"/>
<circle cx="114.5" cy="147" r="4" fill="#a8a8a8" stroke="#8a8a8a" stroke-width="0.7"/>
<circle cx="114.5" cy="165" r="4.3" fill="#a8a8a8" stroke="#8a8a8a" stroke-width="0.7"/>
<path d="M102 155l4-3v2h6v2h-6v2z" fill="#888"/>
<path d="M131 146v21" fill="none" stroke="#aaa" stroke-width="3"/><path d="M131 146v21" fill="none" stroke="#f4f4f4" stroke-width="1.2"/>
<circle cx="131" cy="146" r="2.2" fill="#a8a8a8" stroke="#8a8a8a" stroke-width="0.7"/>
<circle cx="131" cy="167" r="2.2" fill="#a8a8a8" stroke="#8a8a8a" stroke-width="0.7"/>
<path d="M136 149h3v14h-3z M141 150l8-7 2 2-8 7z M144 154l8-7 2 2-8 7z M142 158l5 4-5 4v-2l3-2-3-2z M156 158l-5 4 5 4v-2l-3-2 3-2z" fill="#a8a8a8"/>
<path d="M168 146v21" fill="none" stroke="#aaa" stroke-width="3"/><path d="M168 146v21" fill="none" stroke="#f4f4f4" stroke-width="1.2"/>
<path d="M191 146v21" fill="none" stroke="#aaa" stroke-width="3"/><path d="M191 146v21" fill="none" stroke="#f4f4f4" stroke-width="1.2"/>
<circle cx="168" cy="146" r="2.2" fill="#a8a8a8" stroke="#8a8a8a" stroke-width="0.7"/>
<circle cx="168" cy="167" r="2.2" fill="#a8a8a8" stroke="#8a8a8a" stroke-width="0.7"/>
<circle cx="191" cy="146" r="2.2" fill="#a8a8a8" stroke="#8a8a8a" stroke-width="0.7"/>
<circle cx="191" cy="167" r="2.2" fill="#a8a8a8" stroke="#8a8a8a" stroke-width="0.7"/>
<path d="M173 153l8-8 2 2-8 8z M176 157l8-8 2 2-8 8z M183 155h3v13h-3z" fill="#999"/>
<path d="M206 153v13M215 150l8-6M217 155l8-6M213 158l4 4.5-4 4.5M227 158l-4 4.5 4 4.5" fill="none" stroke="#e8902a" stroke-width="4"/><path d="M206 153v13M215 150l8-6M217 155l8-6M213 158l4 4.5-4 4.5M227 158l-4 4.5 4 4.5" fill="none" stroke="#86d020" stroke-width="2"/>
<circle cx="210.5" cy="150" r="6" fill="#2a88d8" stroke="#123" stroke-width="0.7"/><path d="M210.5 146v4.5" stroke="#111" stroke-width="1.6"/><circle cx="210.5" cy="152.5" r="0.9" fill="#111"/>
<path d="M244 153v13M253 150l8-6M255 155l8-6M251 158l4 4.5-4 4.5M265 158l-4 4.5 4 4.5" fill="none" stroke="#d83020" stroke-width="4"/><path d="M244 153v13M253 150l8-6M255 155l8-6M251 158l4 4.5-4 4.5M265 158l-4 4.5 4 4.5" fill="none" stroke="#86d020" stroke-width="2"/>
<path d="M245 143h7l-3 4.5 4.5 1-8 8 2.5-5.5-4-1z" fill="#2a88d8" stroke="#123" stroke-width="0.6"/><path d="M249 150l7 7" stroke="#123" stroke-width="1.2"/>
<ellipse cx="292" cy="156" rx="13" ry="8" transform="rotate(-35 292 156)" fill="none" stroke="#999" stroke-width="1.6"/><ellipse cx="292" cy="156" rx="10" ry="5.5" transform="rotate(-35 292 156)" fill="none" stroke="#aaa" stroke-width="1"/><path d="M286 150l12 12M298 150l-12 12" stroke="#a0a0a0" stroke-width="2.4"/>
<path d="M318 148q-4 8 0 17" fill="none" stroke="#aaa" stroke-width="3"/><path d="M318 148q-4 8 0 17" fill="none" stroke="#f4f4f4" stroke-width="1.2"/>
<path d="M338 148q4 8 0 17" fill="none" stroke="#aaa" stroke-width="3"/><path d="M338 148q4 8 0 17" fill="none" stroke="#f4f4f4" stroke-width="1.2"/>
<circle cx="320" cy="147" r="4" fill="#a8a8a8" stroke="#8a8a8a" stroke-width="0.7"/>
<circle cx="319" cy="166" r="4" fill="#a8a8a8" stroke="#8a8a8a" stroke-width="0.7"/>
<circle cx="337.5" cy="147" r="4" fill="#a8a8a8" stroke="#8a8a8a" stroke-width="0.7"/>
<circle cx="337.5" cy="166" r="4" fill="#a8a8a8" stroke="#8a8a8a" stroke-width="0.7"/>
<path d="M328 152v10" fill="none" stroke="#aaa" stroke-width="3"/><path d="M328 152v10" fill="none" stroke="#f4f4f4" stroke-width="1.2"/>
<circle cx="328" cy="151" r="2.2" fill="#a8a8a8" stroke="#8a8a8a" stroke-width="0.7"/>
<circle cx="328" cy="163" r="2.2" fill="#a8a8a8" stroke="#8a8a8a" stroke-width="0.7"/>
<path d="M352 147h6M352 151h6" stroke="#a8a8a8" stroke-width="2.2"/>
<path d="M364 148q-4 8 0 17" fill="none" stroke="#aaa" stroke-width="3"/><path d="M364 148q-4 8 0 17" fill="none" stroke="#f4f4f4" stroke-width="1.2"/>
<path d="M374 148q-4 8 0 17" fill="none" stroke="#aaa" stroke-width="3"/><path d="M374 148q-4 8 0 17" fill="none" stroke="#f4f4f4" stroke-width="1.2"/>
<circle cx="365" cy="147" r="4" fill="#a8a8a8" stroke="#8a8a8a" stroke-width="0.7"/>
<circle cx="364.5" cy="166" r="4" fill="#a8a8a8" stroke="#8a8a8a" stroke-width="0.7"/>
<circle cx="374.5" cy="147" r="4" fill="#a8a8a8" stroke="#8a8a8a" stroke-width="0.7"/>
<circle cx="374.5" cy="166" r="4" fill="#a8a8a8" stroke="#8a8a8a" stroke-width="0.7"/>
<polygon points="387.5,153.0 396.5,153.0 392,158.0" fill="#7a7a7a"/>
<path d="M407 154v8" fill="none" stroke="#aaa" stroke-width="3"/><path d="M407 154v8" fill="none" stroke="#f4f4f4" stroke-width="1.2"/>
<circle cx="407" cy="154" r="2.6" fill="#a8a8a8" stroke="#8a8a8a" stroke-width="0.7"/>
<circle cx="407" cy="163" r="2.6" fill="#a8a8a8" stroke="#8a8a8a" stroke-width="0.7"/>
<path d="M414.5 151v8" fill="none" stroke="#aaa" stroke-width="3"/><path d="M414.5 151v8" fill="none" stroke="#f4f4f4" stroke-width="1.2"/>
<circle cx="414.5" cy="151" r="2.6" fill="#a8a8a8" stroke="#8a8a8a" stroke-width="0.7"/>
<circle cx="414.5" cy="160" r="2.6" fill="#a8a8a8" stroke="#8a8a8a" stroke-width="0.7"/>
<path d="M421.5 147v8" fill="none" stroke="#aaa" stroke-width="3"/><path d="M421.5 147v8" fill="none" stroke="#f4f4f4" stroke-width="1.2"/>
<circle cx="421.5" cy="147" r="2.6" fill="#a8a8a8" stroke="#8a8a8a" stroke-width="0.7"/>
<circle cx="421.5" cy="156" r="2.6" fill="#a8a8a8" stroke="#8a8a8a" stroke-width="0.7"/>
<path d="M429 144v8" fill="none" stroke="#aaa" stroke-width="3"/><path d="M429 144v8" fill="none" stroke="#f4f4f4" stroke-width="1.2"/>
<circle cx="429" cy="144" r="2.6" fill="#a8a8a8" stroke="#8a8a8a" stroke-width="0.7"/>
<circle cx="429" cy="153" r="2.6" fill="#a8a8a8" stroke="#8a8a8a" stroke-width="0.7"/>
<path d="M442.5 143.5l14 14M456.5 143.5l-14 14" stroke="#8a0a0a" stroke-width="5"/><path d="M442.5 143.5l14 14M456.5 143.5l-14 14" stroke="#e01b1b" stroke-width="3.6"/><path d="M459 168l6-6M462 171l6-6M453 160l4 4-4 4M468 162l-3 3 3 3" fill="none" stroke="#3a7a10" stroke-width="2.4"/><path d="M459 168l6-6M462 171l6-6" stroke="#7ccc20" stroke-width="1.2"/>
<line x1="475.5" y1="137" x2="475.5" y2="174" stroke="#c4c4c4" stroke-width="1.3"/><line x1="476.8" y1="137" x2="476.8" y2="174" stroke="#fafafa" stroke-width="1"/>
<line x1="481.7" y1="140" x2="481.7" y2="171" stroke="#a0a0a0" stroke-width="1" stroke-dasharray="1 2"/>
<path d="M499 149l18-3 2 19-18 3z" fill="none" stroke="#2e6e10" stroke-width="3.4"/><path d="M499 149l18-3 2 19-18 3z" fill="none" stroke="#7ccc20" stroke-width="2"/><rect x="503" y="151" width="10" height="12" rx="3" transform="rotate(-10 508 157)" fill="none" stroke="#999" stroke-width="1.4"/>
<circle cx="499" cy="149.5" r="3.4" fill="#e01b1b" stroke="#7a0a0a" stroke-width="0.8"/>
<circle cx="517" cy="146.5" r="3.4" fill="#e01b1b" stroke="#7a0a0a" stroke-width="0.8"/>
<circle cx="501" cy="166.5" r="3.4" fill="#e01b1b" stroke="#7a0a0a" stroke-width="0.8"/>
<circle cx="519" cy="164" r="3.4" fill="#e01b1b" stroke="#7a0a0a" stroke-width="0.8"/>
<polygon points="528.5,153.0 537.5,153.0 533,158.0" fill="#000"/>
<circle cx="558" cy="156" r="11" fill="none" stroke="#aaa" stroke-width="2.2" stroke-dasharray="3.5 3"/>
<circle cx="555" cy="147" r="2.4" fill="#a8a8a8" stroke="#8a8a8a" stroke-width="0.7"/>
<circle cx="564" cy="146" r="2.4" fill="#a8a8a8" stroke="#8a8a8a" stroke-width="0.7"/>
<circle cx="569.5" cy="157" r="2.4" fill="#a8a8a8" stroke="#8a8a8a" stroke-width="0.7"/>
<path d="M586 150h14M586 156h14M590 145v16M597 145v16" stroke="#aaa" stroke-width="2.8"/><path d="M596 165q6-1 8-8" stroke="#aaa" stroke-width="1.4" fill="none"/>
<circle cx="605" cy="154" r="2.6" fill="#a8a8a8" stroke="#8a8a8a" stroke-width="0.7"/>
<circle cx="604" cy="164" r="2.6" fill="#a8a8a8" stroke="#8a8a8a" stroke-width="0.7"/>
<circle cx="593" cy="167" r="2.6" fill="#a8a8a8" stroke="#8a8a8a" stroke-width="0.7"/>
<path d="M623 150h14M623 156h14M627 145v16M634 145v16" stroke="#aaa" stroke-width="2.8"/><path d="M633 165q6-1 8-8" stroke="#aaa" stroke-width="1.4" fill="none"/>
<circle cx="642" cy="154" r="2.6" fill="#a8a8a8" stroke="#8a8a8a" stroke-width="0.7"/>
<circle cx="641" cy="164" r="2.6" fill="#a8a8a8" stroke="#8a8a8a" stroke-width="0.7"/>
<circle cx="630" cy="167" r="2.6" fill="#a8a8a8" stroke="#8a8a8a" stroke-width="0.7"/>
<path d="M658 150h14M665 143v14" stroke="#3a70c8" stroke-width="5"/><path d="M664 156h13M670 149v19" stroke="#5cb820" stroke-width="3"/>
<circle cx="681" cy="153" r="2.6" fill="#e01b1b" stroke="#7a0a0a" stroke-width="0.8"/>
<circle cx="670" cy="167.5" r="2.6" fill="#e01b1b" stroke="#7a0a0a" stroke-width="0.8"/>
<circle cx="681.5" cy="165" r="2.6" fill="#e01b1b" stroke="#7a0a0a" stroke-width="0.8"/>
<circle cx="676" cy="160" r="2" fill="#cccc22"/>
<polygon points="692.4,153.0 701.4,153.0 696.9,158.0" fill="#000"/></svg>

<!-- COMBO VIEW -->
<div class="a" style="left:0;top:177px;width:323px;height:606px;background:#f0f0f0">
  <div class="a" style="left:0;top:0;width:323px;height:23px;background:linear-gradient(#dcdcdc,#d4d4d4);border-left:1px solid #bbb"></div>
  <div class="t" style="left:6px;top:6px;font-size:14px;color:#111">Combo View</div>
  <svg class="a" style="left:302px;top:6px" width="14" height="12"><path d="M4.5 1.5h7v6h-2M2.5 4.5h7v6h-7z" fill="none" stroke="#222"/><path d="M4.5 2.5h7" stroke="#222"/></svg>
  <!-- tabs -->
  <div class="a" style="left:2px;top:28px;width:61px;height:27px;background:#f0f0f0;border:1px solid #d9d9d9;border-bottom:none"></div>
  <div class="t" style="left:14px;top:35px;font-size:13.5px">Model</div>
  <div class="a" style="left:62px;top:26px;width:89px;height:31px;background:#fff;border:1px solid #d9d9d9;border-bottom:none"></div>
  <svg class="a" style="left:78px;top:33px" width="20" height="18"><path d="M2 3l3-3 13 12-1 4-4-1z" fill="#284f86"/><path d="M13 15l4 1-1-4z" fill="#e8e8e8"/><path d="M16 16l1 0 0-1z" fill="#222"/></svg>
  <div class="t" style="left:103px;top:34px;font-size:13.5px">Tasks</div>
  <!-- panel frame -->
  <div class="a" style="left:2px;top:56px;width:317px;height:545px;border:1px solid #d0d0d0;background:#fff"></div>
  <div class="a" id="tp" style="left:3px;top:57px;width:293px;height:543px;background:linear-gradient(#aaaac3 0px,#33336a 445px,#32326a 543px)"></div>
  <!-- scrollbar -->
  <div class="a" style="left:296px;top:57px;width:22px;height:543px;background:#f0f0f0"></div>
  <div class="a" style="left:297px;top:78px;width:20px;height:186px;background:#cdcdcd"></div>
  <svg class="a" style="left:300px;top:62px" width="14" height="10"><path d="M2 8l5-5 5 5" fill="none" stroke="#606060" stroke-width="1.5"/></svg>
  <svg class="a" style="left:300px;top:585px" width="14" height="10"><path d="M2 2l5 5 5-5" fill="none" stroke="#606060" stroke-width="1.5"/></svg>
  <!-- close button -->
  <div class="btn" style="left:107px;top:80px;width:87px;height:24px"></div>
  <div class="t" style="left:134px;top:86px;font-size:13px">Close</div>
  <!-- Solver messages box -->
  <div class="a" style="left:14px;top:126px;width:272px;height:167px;background:#d6dff5;border:1px solid #fff;border-radius:5px 5px 0 0"></div>
  <div class="a" style="left:15px;top:127px;width:270px;height:29px;background:linear-gradient(90deg,#fdfdff 0%,#e8ecf9 50%,#c9d4f2 100%);border-radius:4px 4px 0 0;border-bottom:2px solid #f4f6fc"></div>
  <svg class="a" style="left:22px;top:133px" width="18" height="20"><rect x="1.5" y="2.5" width="13" height="16" fill="#f4f4f4" stroke="#bbb"/><circle cx="14" cy="3" r="2.5" fill="#ffee33"/></svg>
  <div class="t" style="left:42px;top:135px;font-size:13.5px;font-weight:bold;color:#1d55c8">Solver messages</div>
  <svg class="a" style="left:262px;top:131px" width="20" height="20"><circle cx="10" cy="10" r="8.5" fill="#fff" stroke="#c8d0e8"/><path d="M6.5 10l3.5-3.5 3.5 3.5M6.5 14l3.5-3.5 3.5 3.5" fill="none" stroke="#1f3a8a" stroke-width="1.5"/></svg>
  <div class="a" style="left:30px;top:173px;width:141px;height:15px;background:#e2e2e4"></div>
  <div class="t" style="left:30px;top:175px;font-size:13px;color:#1a921a">Fully constrained sketch</div>
  <div class="a" style="left:30px;top:197px;width:88px;height:15px;background:#e2e2e4"></div>
  <div class="t" style="left:30px;top:199px;font-size:13px;color:#1a921a">Solved in 0 sec</div>
  <div class="cb" style="left:30px;top:223px"></div>
  <div class="t" style="left:52px;top:225px">Auto remove redundants</div>
  <div class="cb" style="left:30px;top:254px"></div>
  <div class="t" style="left:52px;top:256px">Auto update</div>
  <div class="btn" style="left:155px;top:250px;width:114px;height:26px"></div>
  <div class="t" style="left:190px;top:256px">Update</div>
  <!-- Edit controls -->
  <div class="a" style="left:14px;top:303px;width:272px;height:297px;background:#d6dff5;border:1px solid #fff;border-radius:5px 5px 0 0"></div>
  <div class="a" style="left:15px;top:304px;width:270px;height:29px;background:linear-gradient(90deg,#fdfdff 0%,#e8ecf9 50%,#c9d4f2 100%);border-radius:4px 4px 0 0;border-bottom:2px solid #f4f6fc"></div>
  <svg class="a" style="left:22px;top:310px" width="18" height="20"><rect x="1.5" y="2.5" width="13" height="16" fill="#f4f4f4" stroke="#bbb"/><circle cx="14" cy="3" r="2.5" fill="#ffee33"/></svg>
  <div class="t" style="left:42px;top:312px;font-size:13.5px;font-weight:bold;color:#1d55c8">Edit controls</div>
  <svg class="a" style="left:262px;top:308px" width="20" height="20"><circle cx="10" cy="10" r="8.5" fill="#fff" stroke="#c8d0e8"/><path d="M6.5 10l3.5-3.5 3.5 3.5M6.5 14l3.5-3.5 3.5 3.5" fill="none" stroke="#1f3a8a" stroke-width="1.5"/></svg>
  <div class="cb chk" style="left:30px;top:351px"></div>
  <div class="t" style="left:52px;top:353px">Show grid</div>
  <div class="t" style="left:30px;top:385.5px">Grid size:</div>
  <div class="a" style="left:154px;top:377px;width:116px;height:27px;background:#fff;border:1px solid #a0a0a0"></div>
  <div class="t" style="left:158px;top:385px">10.00 mm</div>
  <div class="a" style="left:250px;top:378px;width:19px;height:25px;background:#e8e8e8;border-left:1px solid #ddd"></div>
  <svg class="a" style="left:252px;top:380px" width="14" height="20"><path d="M3 7l4-4 4 4z M3 12l4 4 4-4z" fill="#111"/></svg>
  <div class="cb chk" style="left:30px;top:414px"></div>
  <div class="t" style="left:52px;top:415px">Grid snap</div>
  <div class="cb chk" style="left:30px;top:443px"></div>
  <div class="t" style="left:52px;top:444px">Auto constraints</div>
  <div class="cb chk" style="left:30px;top:471px"></div>
  <div class="t" style="left:52px;top:472px">Avoid redundant auto constraints</div>
  <div class="t" style="left:30px;top:500px">Rendering order (global):</div>
  <div class="a" style="left:30px;top:522px;width:240px;height:78px;background:#fff;border:1px solid #a8a8a8;border-bottom:none"></div>
  <div class="t" style="left:36px;top:529px;font-size:14.3px">Normal Geometry</div>
  <div class="t" style="left:36px;top:551px;font-size:14.3px">Construction Geometry</div>
  <div class="t" style="left:36px;top:573px;font-size:14.3px">External Geometry</div>
</div>
<div class="a" style="left:323px;top:177px;width:4px;height:606px;background:#f0f0f0"></div>

<!-- 3D VIEW -->
<svg id="view" class="a" width="1209" height="578" viewBox="327 177 1209 578">
  <defs>
    <linearGradient id="bg" x1="0" y1="0" x2="0" y2="1">
      <stop offset="0" stop-color="#333366"/>
      <stop offset="1" stop-color="#aaaabf"/>
    </linearGradient>
  </defs>
  <rect x="327" y="177" width="1209" height="578" fill="url(#bg)"/>
  <defs><linearGradient id="gridg" gradientUnits="userSpaceOnUse" x1="0" y1="177" x2="0" y2="755"><stop offset="0" stop-color="#bcbcb0" stop-opacity="0.82"/><stop offset="0.5" stop-color="#bcbcb0" stop-opacity="0.68"/><stop offset="1" stop-color="#b8b8ac" stop-opacity="0.5"/></linearGradient></defs>
<path d="M302.55 158.29V755 M328.50 158.29V755 M354.46 158.29V755 M380.42 158.29V755 M406.37 158.29V755 M432.33 158.29V755 M458.29 158.29V755 M484.25 158.29V755 M510.20 158.29V755 M536.16 158.29V755 M562.12 158.29V755 M588.07 158.29V755 M614.03 158.29V755 M639.99 158.29V755 M665.94 158.29V755 M691.90 158.29V755 M717.86 158.29V755 M743.82 158.29V755 M769.77 158.29V755 M795.73 158.29V755 M821.69 158.29V755 M847.64 158.29V755 M873.60 158.29V755 M899.56 158.29V755 M925.51 158.29V755 M951.47 158.29V755 M977.43 158.29V755 M1003.38 158.29V755 M1029.34 158.29V755 M1055.30 158.29V755 M1081.26 158.29V755 M1107.21 158.29V755 M1133.17 158.29V755 M1159.13 158.29V755 M1185.08 158.29V755 M1211.04 158.29V755 M1237.00 158.29V755 M1262.95 158.29V755 M1288.91 158.29V755 M1314.87 158.29V755 M1340.83 158.29V755 M1366.78 158.29V755 M1392.74 158.29V755 M1418.70 158.29V755 M1444.65 158.29V755 M1470.61 158.29V755 M1496.57 158.29V755 M1522.53 158.29V755" stroke="url(#gridg)" stroke-width="1.1" stroke-dasharray="3.4 3.089"/>
<path d="M302.55 158.29H1536 M302.55 184.25H1536 M302.55 210.20H1536 M302.55 236.16H1536 M302.55 262.12H1536 M302.55 288.07H1536 M302.55 314.03H1536 M302.55 339.99H1536 M302.55 365.94H1536 M302.55 391.90H1536 M302.55 417.86H1536 M302.55 443.82H1536 M302.55 469.77H1536 M302.55 495.73H1536 M302.55 521.69H1536 M302.55 547.64H1536 M302.55 573.60H1536 M302.55 599.56H1536 M302.55 625.51H1536 M302.55 651.47H1536 M302.55 677.43H1536 M302.55 703.38H1536 M302.55 729.34H1536" stroke="url(#gridg)" stroke-width="1.1" stroke-dasharray="3.6 2.889"/>
  <line x1="488" y1="574.0" x2="1259" y2="574.0" stroke="#e85a5a" stroke-width="1.7" stroke-opacity="0.8"/>
<defs><linearGradient id="gax" gradientUnits="userSpaceOnUse" x1="0" y1="188" x2="0" y2="755"><stop offset="0" stop-color="#7cf07c" stop-opacity="0.95"/><stop offset="1" stop-color="#90e890" stop-opacity="0.45"/></linearGradient></defs>
<rect x="873" y="188.5" width="2" height="567" fill="url(#gax)"/>
<line x1="820.0" y1="394.3" x2="788.2" y2="362.5" stroke="#ff2a00" stroke-width="1.65" />
<line x1="931.9" y1="282.6" x2="900.1" y2="250.8" stroke="#ff2a00" stroke-width="1.65" />
<line x1="800.9" y1="375.2" x2="841.1" y2="335.1" stroke="#ff2a00" stroke-width="1.65" />
<line x1="875.1" y1="301.2" x2="912.8" y2="263.5" stroke="#ff2a00" stroke-width="1.65" />
<polygon points="800.9,375.2 804.8,366.3 809.8,371.4" fill="#ff2a00"/>
<polygon points="912.8,263.5 909.0,272.4 903.9,267.3" fill="#ff2a00"/>
<text x="858.0" y="318.0" transform="rotate(-45.0 858.0 318.0)" font-size="14.5" fill="#ac3430" fill-opacity="1" stroke="#ac3430" stroke-width="0.25" text-anchor="middle" dominant-baseline="central" font-family="Liberation Sans">61 mm</text>
<line x1="931.9" y1="282.6" x2="955.9" y2="241.0" stroke="#ff2a00" stroke-width="1.65" />
<line x1="1127.7" y1="395.8" x2="1151.7" y2="354.2" stroke="#ff2a00" stroke-width="1.65" />
<line x1="947.9" y1="254.9" x2="1030.4" y2="302.6" stroke="#ff2a00" stroke-width="1.65" />
<line x1="1072.0" y1="326.6" x2="1143.7" y2="368.1" stroke="#ff2a00" stroke-width="1.65" />
<polygon points="947.9,254.9 957.5,256.3 953.9,262.5" fill="#ff2a00"/>
<polygon points="1143.7,368.1 1134.1,366.7 1137.7,360.5" fill="#ff2a00"/>
<text x="1051.0" y="315.0" transform="rotate(30.0 1051.0 315.0)" font-size="14.5" fill="#ac3430" fill-opacity="1" stroke="#ac3430" stroke-width="0.25" text-anchor="middle" dominant-baseline="central" font-family="Liberation Sans">87 mm</text>
<line x1="1127.7" y1="395.8" x2="1171.1" y2="407.6" stroke="#ff2a00" stroke-width="1.65" />
<line x1="1089.0" y1="538.7" x2="1132.4" y2="550.5" stroke="#ff2a00" stroke-width="1.65" />
<line x1="1154.7" y1="403.1" x2="1141.1" y2="453.3" stroke="#ff2a00" stroke-width="1.65" />
<line x1="1128.6" y1="499.6" x2="1116.0" y2="546.0" stroke="#ff2a00" stroke-width="1.65" />
<polygon points="1154.7,403.1 1155.8,412.7 1148.9,410.9" fill="#ff2a00"/>
<polygon points="1116.0,546.0 1114.9,536.4 1121.9,538.3" fill="#ff2a00"/>
<text x="1137.0" y="477.0" transform="rotate(-75.0 1137.0 477.0)" font-size="14.5" fill="#ac3430" fill-opacity="1" stroke="#ac3430" stroke-width="0.25" text-anchor="middle" dominant-baseline="central" font-family="Liberation Sans">57 mm</text>
<line x1="1000.5" y1="563.1" x2="989.3" y2="522.6" stroke="#ff2a00" stroke-width="1.65" />
<line x1="1089.0" y1="538.7" x2="1077.8" y2="498.2" stroke="#ff2a00" stroke-width="1.65" />
<line x1="993.6" y1="538.0" x2="1015.3" y2="532.1" stroke="#ff2a00" stroke-width="1.65" />
<line x1="1063.5" y1="518.8" x2="1082.1" y2="513.6" stroke="#ff2a00" stroke-width="1.65" />
<polygon points="993.6,538.0 1001.3,532.2 1003.2,539.1" fill="#ff2a00"/>
<polygon points="1082.1,513.6 1074.4,519.5 1072.5,512.6" fill="#ff2a00"/>
<text x="1039.0" y="524.0" transform="rotate(-15.4 1039.0 524.0)" font-size="14.5" fill="#ac3430" fill-opacity="1" stroke="#ac3430" stroke-width="0.25" text-anchor="middle" dominant-baseline="central" font-family="Liberation Sans">35 mm</text>
<line x1="928.3" y1="635.5" x2="958.7" y2="665.9" stroke="#ff2a00" stroke-width="1.65" />
<line x1="1000.5" y1="563.1" x2="1030.9" y2="593.5" stroke="#ff2a00" stroke-width="1.65" />
<line x1="947.4" y1="654.6" x2="972.0" y2="629.9" stroke="#ff2a00" stroke-width="1.65" />
<line x1="1005.9" y1="595.9" x2="1019.6" y2="582.2" stroke="#ff2a00" stroke-width="1.65" />
<polygon points="947.4,654.6 951.2,645.7 956.3,650.7" fill="#ff2a00"/>
<polygon points="1019.6,582.2 1015.8,591.1 1010.7,586.0" fill="#ff2a00"/>
<text x="989.0" y="613.0" transform="rotate(-45.0 989.0 613.0)" font-size="14.5" fill="#ac3430" fill-opacity="1" stroke="#ac3430" stroke-width="0.25" text-anchor="middle" dominant-baseline="central" font-family="Liberation Sans">40 mm</text>
<line x1="610.0" y1="591.3" x2="564.6" y2="603.3" stroke="#ff2a00" stroke-width="1.65" />
<line x1="574.8" y1="458.5" x2="529.4" y2="470.5" stroke="#ff2a00" stroke-width="1.65" />
<line x1="581.0" y1="599.0" x2="567.9" y2="549.5" stroke="#ff2a00" stroke-width="1.65" />
<line x1="554.6" y1="499.2" x2="545.8" y2="466.2" stroke="#ff2a00" stroke-width="1.65" />
<polygon points="581.0,599.0 575.2,591.2 582.2,589.4" fill="#ff2a00"/>
<polygon points="545.8,466.2 551.6,474.0 544.6,475.8" fill="#ff2a00"/>
<text x="562.5" y="524.0" transform="rotate(-103.0 562.5 524.0)" font-size="14.5" fill="#ac3430" fill-opacity="1" stroke="#ac3430" stroke-width="0.25" text-anchor="middle" dominant-baseline="central" font-family="Liberation Sans">53 mm</text>
<line x1="574.8" y1="458.5" x2="586.2" y2="416.0" stroke="#ff2a00" stroke-width="1.65" />
<line x1="788.0" y1="515.8" x2="799.4" y2="473.3" stroke="#ff2a00" stroke-width="1.65" />
<line x1="582.2" y1="431.0" x2="655.3" y2="450.6" stroke="#ff2a00" stroke-width="1.65" />
<line x1="703.6" y1="463.6" x2="795.4" y2="488.3" stroke="#ff2a00" stroke-width="1.65" />
<polygon points="582.2,431.0 591.8,429.8 590.0,436.8" fill="#ff2a00"/>
<polygon points="795.4,488.3 785.8,489.4 787.6,482.5" fill="#ff2a00"/>
<text x="680.0" y="455.0" transform="rotate(15.0 680.0 455.0)" font-size="14.5" fill="#ac3430" fill-opacity="1" stroke="#ac3430" stroke-width="0.25" text-anchor="middle" dominant-baseline="central" font-family="Liberation Sans">85 mm</text>
<line x1="788.0" y1="515.8" x2="744.5" y2="504.3" stroke="#ff2a00" stroke-width="1.65" />
<line x1="820.0" y1="394.3" x2="776.5" y2="382.8" stroke="#ff2a00" stroke-width="1.65" />
<line x1="760.0" y1="508.4" x2="771.4" y2="465.1" stroke="#ff2a00" stroke-width="1.65" />
<line x1="784.6" y1="414.9" x2="792.0" y2="386.9" stroke="#ff2a00" stroke-width="1.65" />
<polygon points="760.0,508.4 758.8,498.8 765.7,500.6" fill="#ff2a00"/>
<polygon points="792.0,386.9 793.1,396.5 786.2,394.7" fill="#ff2a00"/>
<text x="778.0" y="440.0" transform="rotate(-75.0 778.0 440.0)" font-size="14.5" fill="#ac3430" fill-opacity="1" stroke="#ac3430" stroke-width="0.25" text-anchor="middle" dominant-baseline="central" font-family="Liberation Sans">48 mm</text>
<line x1="683.6" y1="574.2" x2="683.6" y2="687.0" stroke="#ff2a00" stroke-width="1.65" />
<line x1="928.3" y1="635.5" x2="928.3" y2="687.2" stroke="#ff2a00" stroke-width="1.65" />
<line x1="873.8" y1="574.2" x2="873.8" y2="668.0" stroke="#ff2a00" stroke-width="1.65" />
<line x1="683.6" y1="651.6" x2="744.5" y2="651.6" stroke="#ff2a00" stroke-width="1.65" />
<line x1="794.0" y1="651.6" x2="873.8" y2="651.6" stroke="#ff2a00" stroke-width="1.65" />
<polygon points="683.6,651.6 692.6,648.0 692.6,655.2" fill="#ff2a00"/>
<polygon points="873.8,651.6 864.8,655.2 864.8,648.0" fill="#ff2a00"/>
<text x="769.5" y="652.1" transform="rotate(0.0 769.5 652.1)" font-size="14.5" fill="#ac3430" fill-opacity="1" stroke="#ac3430" stroke-width="0.25" text-anchor="middle" dominant-baseline="central" font-family="Liberation Sans">73 mm</text>
<line x1="683.6" y1="670.8" x2="744.5" y2="670.8" stroke="#ff2a00" stroke-width="1.65" />
<line x1="794.0" y1="670.8" x2="928.3" y2="670.8" stroke="#ff2a00" stroke-width="1.65" />
<polygon points="683.6,670.8 692.6,667.2 692.6,674.4" fill="#ff2a00"/>
<polygon points="928.3,670.8 919.3,674.4 919.3,667.2" fill="#ff2a00"/>
<text x="769.5" y="671.3" transform="rotate(0.0 769.5 671.3)" font-size="14.5" fill="#ac3430" fill-opacity="1" stroke="#ac3430" stroke-width="0.25" text-anchor="middle" dominant-baseline="central" font-family="Liberation Sans">94 mm</text>
<line x1="683.6" y1="574.2" x2="729.0" y2="574.2" stroke="#ff2a00" stroke-width="1.65" />
<line x1="683.6" y1="635.7" x2="729.0" y2="635.7" stroke="#ff2a00" stroke-width="1.65" />
<line x1="711.8" y1="574.2" x2="711.8" y2="583.0" stroke="#ff2a00" stroke-width="1.65" />
<line x1="711.8" y1="626.0" x2="711.8" y2="635.7" stroke="#ff2a00" stroke-width="1.65" />
<polygon points="711.8,574.2 715.4,583.2 708.2,583.2" fill="#ff2a00"/>
<polygon points="711.8,635.7 708.2,626.7 715.4,626.7" fill="#ff2a00"/>
<text x="711.8" y="605.0" transform="rotate(-90.0 711.8 605.0)" font-size="14.5" fill="#ac3430" fill-opacity="1" stroke="#ac3430" stroke-width="0.25" text-anchor="middle" dominant-baseline="central" font-family="Liberation Sans">24 mm</text>
<circle cx="683.6" cy="574.2" r="19.3" fill="none" stroke="#00ff00" stroke-width="2.1"/>
<circle cx="873.8" cy="574.2" r="21.8" fill="none" stroke="#00ff00" stroke-width="2.1"/>
<line x1="668.7" y1="586.4" x2="698.5" y2="562.0" stroke="#ff2a00" stroke-width="1.8" />
<polygon points="668.7,586.4 672.8,578.8 677.0,583.9" fill="#ff2a00"/>
<polygon points="698.5,562.0 694.4,569.6 690.2,564.5" fill="#ff2a00"/>
<text x="719.0" y="547.0" transform="rotate(-40.0 719.0 547.0)" font-size="14.5" fill="#ac3430" fill-opacity="1" stroke="#ac3430" stroke-width="0.25" text-anchor="middle" dominant-baseline="central" font-family="Liberation Sans">⌀15 mm</text>
<line x1="856.9" y1="588.0" x2="890.7" y2="560.4" stroke="#ff2a00" stroke-width="1.8" />
<polygon points="856.9,588.0 861.0,580.4 865.2,585.5" fill="#ff2a00"/>
<polygon points="890.7,560.4 886.6,568.0 882.4,562.9" fill="#ff2a00"/>
<text x="917.0" y="541.0" transform="rotate(-40.0 917.0 541.0)" font-size="14.5" fill="#ac3430" fill-opacity="1" stroke="#ac3430" stroke-width="0.25" text-anchor="middle" dominant-baseline="central" font-family="Liberation Sans">⌀17 mm</text>
<polyline points="931.9,282.6 1127.7,395.8 1089.0,538.7 1000.5,563.1 928.3,635.5 683.6,635.7 610.0,591.3 574.8,458.5 788.0,515.8 820.0,394.3 931.9,282.6" fill="none" stroke="#00ff00" stroke-width="2.15" stroke-linejoin="round"/>
<circle cx="931.9" cy="282.6" r="2.3" fill="#00ff00"/>
<circle cx="1127.7" cy="395.8" r="2.3" fill="#00ff00"/>
<circle cx="1089" cy="538.7" r="2.3" fill="#00ff00"/>
<circle cx="1000.5" cy="563.1" r="2.3" fill="#00ff00"/>
<circle cx="928.3" cy="635.5" r="2.3" fill="#00ff00"/>
<circle cx="683.6" cy="635.7" r="2.3" fill="#00ff00"/>
<circle cx="610" cy="591.3" r="2.3" fill="#00ff00"/>
<circle cx="574.8" cy="458.5" r="2.3" fill="#00ff00"/>
<circle cx="788.0" cy="515.8" r="2.3" fill="#00ff00"/>
<circle cx="820.0" cy="394.3" r="2.3" fill="#00ff00"/>
<line x1="788.0" y1="515.8" x2="744.5" y2="504.1" stroke="#ff2a00" stroke-width="1.6" />
<line x1="788.0" y1="515.8" x2="795.1" y2="488.7" stroke="#ff2a00" stroke-width="1.6" />
<line x1="683.6" y1="635.7" x2="729.0" y2="635.7" stroke="#ff2a00" stroke-width="1.8" />
<path d="M986.5 314.1A63 63 0 0 1 956.0 340.8" fill="none" stroke="#ff2a00" stroke-width="1.55"/>
<path d="M923.6 345.1A63 63 0 0 1 887.3 327.1" fill="none" stroke="#ff2a00" stroke-width="1.55"/>
<line x1="983.0" y1="312.1" x2="989.9" y2="316.1" stroke="#ff2a00" stroke-width="1.6" />
<line x1="890.1" y1="324.2" x2="884.4" y2="329.9" stroke="#ff2a00" stroke-width="1.6" />
<text x="940.1" y="345.1" transform="rotate(0.0 940.1 345.1)" font-size="15.5" fill="#ac3430" fill-opacity="1" stroke="#ac3430" stroke-width="0.25" text-anchor="middle" dominant-baseline="central" font-family="Liberation Serif">105 °</text>
<path d="M1111.2 456.6A63 63 0 0 1 1077.7 434.1" fill="none" stroke="#ff2a00" stroke-width="1.55"/>
<path d="M1065.2 403.9A63 63 0 0 1 1073.1 364.3" fill="none" stroke="#ff2a00" stroke-width="1.55"/>
<line x1="1112.2" y1="452.7" x2="1110.1" y2="460.5" stroke="#ff2a00" stroke-width="1.6" />
<line x1="1076.6" y1="366.3" x2="1069.7" y2="362.3" stroke="#ff2a00" stroke-width="1.6" />
<text x="1069.5" y="419.8" transform="rotate(0.0 1069.5 419.8)" font-size="15.5" fill="#ac3430" fill-opacity="1" stroke="#ac3430" stroke-width="0.25" text-anchor="middle" dominant-baseline="central" font-family="Liberation Serif">105 °</text>
<path d="M1028.3 555.4A63 63 0 0 1 1034.9 506.3" fill="none" stroke="#ff2a00" stroke-width="1.55"/>
<path d="M1056.5 484.8A63 63 0 0 1 1105.5 477.9" fill="none" stroke="#ff2a00" stroke-width="1.55"/>
<line x1="1032.1" y1="554.4" x2="1024.4" y2="556.5" stroke="#ff2a00" stroke-width="1.6" />
<line x1="1104.5" y1="481.8" x2="1106.6" y2="474.0" stroke="#ff2a00" stroke-width="1.6" />
<text x="1044.4" y="494.2" transform="rotate(0.0 1044.4 494.2)" font-size="15.5" fill="#ac3430" fill-opacity="1" stroke="#ac3430" stroke-width="0.25" text-anchor="middle" dominant-baseline="central" font-family="Liberation Serif">120 °</text>
<path d="M1061.2 546.4A63 63 0 0 1 1044.5 608.2" fill="none" stroke="#ff2a00" stroke-width="1.55"/>
<path d="M1018.1 623.6A63 63 0 0 1 956.0 607.7" fill="none" stroke="#ff2a00" stroke-width="1.55"/>
<line x1="1057.4" y1="547.4" x2="1065.1" y2="545.3" stroke="#ff2a00" stroke-width="1.6" />
<line x1="958.9" y1="604.9" x2="953.2" y2="610.6" stroke="#ff2a00" stroke-width="1.6" />
<text x="1032.2" y="617.5" transform="rotate(0.0 1032.2 617.5)" font-size="15.5" fill="#ac3430" fill-opacity="1" stroke="#ac3430" stroke-width="0.25" text-anchor="middle" dominant-baseline="central" font-family="Liberation Serif">150 °</text>
<path d="M889.3 635.5A39 39 0 0 1 901.9 606.8" fill="none" stroke="#ff2a00" stroke-width="1.55"/>
<path d="M926.6 596.5A39 39 0 0 1 955.8 607.9" fill="none" stroke="#ff2a00" stroke-width="1.55"/>
<line x1="893.3" y1="635.5" x2="885.3" y2="635.5" stroke="#ff2a00" stroke-width="1.6" />
<line x1="953.0" y1="610.7" x2="958.7" y2="605.0" stroke="#ff2a00" stroke-width="1.6" />
<text x="910.0" y="601.0" transform="rotate(0.0 910.0 601.0)" font-size="15.5" fill="#ac3430" fill-opacity="1" stroke="#ac3430" stroke-width="0.25" text-anchor="middle" dominant-baseline="central" font-family="Liberation Serif">135 °</text>
<path d="M635.7 474.8A63 63 0 0 1 627.6 492.9" fill="none" stroke="#ff2a00" stroke-width="1.55"/>
<path d="M609.0 511.4A63 63 0 0 1 590.9 519.4" fill="none" stroke="#ff2a00" stroke-width="1.55"/>
<line x1="631.8" y1="473.8" x2="639.5" y2="475.8" stroke="#ff2a00" stroke-width="1.6" />
<line x1="589.9" y1="515.5" x2="591.9" y2="523.3" stroke="#ff2a00" stroke-width="1.6" />
<text x="619.3" y="503.1" transform="rotate(0.0 619.3 503.1)" font-size="15.5" fill="#ac3430" fill-opacity="1" stroke="#ac3430" stroke-width="0.25" text-anchor="middle" dominant-baseline="central" font-family="Liberation Serif">60 °</text>
<path d="M726.2 499.2A64 64 0 0 1 744.2 469.1" fill="none" stroke="#ff2a00" stroke-width="1.55"/>
<path d="M769.1 454.6A64 64 0 0 1 804.2 453.9" fill="none" stroke="#ff2a00" stroke-width="1.55"/>
<line x1="730.0" y1="500.3" x2="722.3" y2="498.2" stroke="#ff2a00" stroke-width="1.6" />
<line x1="803.2" y1="457.8" x2="805.3" y2="450.0" stroke="#ff2a00" stroke-width="1.6" />
<text x="755.9" y="460.5" transform="rotate(0.0 755.9 460.5)" font-size="15.5" fill="#ac3430" fill-opacity="1" stroke="#ac3430" stroke-width="0.25" text-anchor="middle" dominant-baseline="central" font-family="Liberation Serif">90 °</text>
<path d="M863.9 350.5A62 62 0 0 1 879.6 411.3" fill="none" stroke="#ff2a00" stroke-width="1.55"/>
<path d="M864.7 437.3A62 62 0 0 1 804.3 454.3" fill="none" stroke="#ff2a00" stroke-width="1.55"/>
<line x1="861.1" y1="353.4" x2="866.8" y2="347.7" stroke="#ff2a00" stroke-width="1.6" />
<line x1="805.3" y1="450.4" x2="803.3" y2="458.1" stroke="#ff2a00" stroke-width="1.6" />
<text x="873.7" y="425.2" transform="rotate(0.0 873.7 425.2)" font-size="15.5" fill="#ac3430" fill-opacity="1" stroke="#ac3430" stroke-width="0.25" text-anchor="middle" dominant-baseline="central" font-family="Liberation Serif">150 °</text>
<rect x="901.5" y="625.5" width="16" height="24.5" fill="none" stroke="#ff8020" stroke-width="3.6"/>
<rect x="932" y="612.7" width="21" height="19" fill="none" stroke="#ff8020" stroke-width="3.6"/>
<text x="662.0" y="573.0" transform="rotate(0.0 662.0 573.0)" font-size="11" fill="#e03020" fill-opacity="1" stroke="#e03020" stroke-width="0.25" text-anchor="middle" dominant-baseline="central" font-family="Liberation Sans">⊥</text>
<text x="660.0" y="636.0" transform="rotate(0.0 660.0 636.0)" font-size="11" fill="#e03020" fill-opacity="1" stroke="#e03020" stroke-width="0.25" text-anchor="middle" dominant-baseline="central" font-family="Liberation Sans">⊥</text>
<line x1="802.0" y1="622.0" x2="810.0" y2="622.0" stroke="#ff2a00" stroke-width="1.6" />
<polygon points="1473,191.5 1482.8,182 1492.5,191.5" fill="#a4a4c4" fill-opacity="0.9"/>
<polygon points="1473,278.5 1482.8,288 1492.5,278.5" fill="#a4a4c4" fill-opacity="0.9"/>
<polygon points="1439.5,226.5 1430.5,235.3 1439.5,244" fill="#a4a4c4" fill-opacity="0.9"/>
<polygon points="1526,226.5 1535,235.3 1526,244" fill="#a4a4c4" fill-opacity="0.9"/>
<path d="M1467.5 190.5 Q1452 196 1446 205" fill="none" stroke="#a4a4c4" stroke-width="5" stroke-opacity="0.9"/>
<polygon points="1440.5,210.5 1443,198 1452,206" fill="#a4a4c4" fill-opacity="0.9"/>
<path d="M1497.5 190.5 Q1513 196 1519 205" fill="none" stroke="#a4a4c4" stroke-width="5" stroke-opacity="0.9"/>
<polygon points="1524,210.5 1522,198 1513,206" fill="#a4a4c4" fill-opacity="0.9"/>
<rect x="1456" y="209" width="52.5" height="52.5" rx="9" fill="#a9a9c6" fill-opacity="0.95"/>
<rect x="1461" y="214.5" width="42" height="42" rx="3" fill="#bcbcd4"/>
<rect x="1465.5" y="218.5" width="33.5" height="34" fill="#d4d4e2" stroke="#e4e4ee" stroke-width="1"/>
<path d="M1460 213.5h8l-8 8z M1504.5 213.5h-8l8 8z M1460 257.5h8l-8-8z M1504.5 257.5h-8l8-8z" fill="#d6d6e6"/>
<text x="1484" y="239.5" font-family="Liberation Sans" font-weight="bold" font-size="11.5" text-anchor="middle" fill="#000" letter-spacing="-1.6">TOP</text>
<line x1="1463" y1="225.5" x2="1463" y2="254" stroke="#90ee90" stroke-width="1.5"/>
<line x1="1463" y1="254" x2="1491" y2="254" stroke="#ffa0a0" stroke-width="1.5"/>
<line x1="1463" y1="254" x2="1455" y2="262" stroke="#2020ff" stroke-width="1.3"/>
<text x="1467" y="216" font-size="6" fill="#80e080" font-family="Liberation Sans">Y</text>
<text x="1502" y="254" font-size="6" fill="#ff8080" font-family="Liberation Sans">X</text>
<path d="M1502 270l6-3 7 2v9l-6 3-7-2z" fill="#8a8aaa"/><path d="M1502 270l6-3 7 2-6 3z" fill="#a0a0c0"/>
<polygon points="1521,273 1530,273 1525.5,278" fill="#5a5a80"/>
<line x1="1511.9" y1="725.4" x2="1511.9" y2="708" stroke="#1a9a1a" stroke-width="2"/>
<polygon points="1508.5,710 1511.9,703.5 1515.3,710" fill="#1a9a1a"/>
<line x1="1511.9" y1="725.4" x2="1528" y2="725.4" stroke="#c02020" stroke-width="2"/>
<polygon points="1526,722 1533,725.4 1526,728.8" fill="#c02020"/>
<polygon points="1511.9,722.5 1514.8,725.4 1511.9,728.3 1509,725.4" fill="#2020c0"/>
<text x="1514" y="707" font-size="8" fill="#222" font-family="Liberation Sans">Y</text>
<text x="1513.5" y="725" font-size="8" fill="#222" font-family="Liberation Sans">Z</text>
<text x="1531" y="726" font-size="8" fill="#222" font-family="Liberation Sans">X</text>
</svg>

<!-- TABS / STATUS -->
<div class="a" style="left:327px;top:755px;width:1209px;height:28px;background:#f0f0f0"></div>
<div class="a" style="left:330px;top:756px;width:137px;height:25px;background:#f0f0f0;border:1px solid #d9d9d9;border-top:none"></div>
<div class="a" style="left:465px;top:754px;width:163px;height:29px;background:#fff;border:1px solid #d9d9d9;border-top:none"></div>
<svg class="a" style="left:341px;top:757px" width="20" height="20" viewBox="0 0 20 20"><path d="M1 1h10v3.6H4.8v3.2h4.6v3.4H4.8V19H1z" fill="#d61c1c"/><path d="M1 1h1.6v18H1z" fill="#8e0c0c"/><g transform="translate(13.2,13.6)" fill="#3d6fb5"><circle r="4.4"/><rect x="-1.3" y="-6.2" width="2.6" height="12.4"/><rect x="-6.2" y="-1.3" width="12.4" height="2.6"/><rect x="-1.3" y="-6.2" width="2.6" height="12.4" transform="rotate(45)"/><rect x="-1.3" y="-6.2" width="2.6" height="12.4" transform="rotate(-45)"/><circle r="1.7" fill="#fff"/></g></svg>
<div class="t" style="left:366px;top:761px">Start page</div>
<svg class="a" style="left:480px;top:759px" width="20" height="20" viewBox="0 0 20 20"><path d="M1 1h10v3.6H4.8v3.2h4.6v3.4H4.8V19H1z" fill="#d61c1c"/><path d="M1 1h1.6v18H1z" fill="#8e0c0c"/><g transform="translate(13.2,13.6)" fill="#3d6fb5"><circle r="4.4"/><rect x="-1.3" y="-6.2" width="2.6" height="12.4"/><rect x="-6.2" y="-1.3" width="12.4" height="2.6"/><rect x="-1.3" y="-6.2" width="2.6" height="12.4" transform="rotate(45)"/><rect x="-1.3" y="-6.2" width="2.6" height="12.4" transform="rotate(-45)"/><circle r="1.7" fill="#fff"/></g></svg>
<div class="t" style="left:505px;top:762px">Unnamed : 1*</div>
<div class="a" style="left:433px;top:760px;width:16px;height:16px;background:#d0d0d0;border:1px solid #c0c0c0;border-radius:2px"></div>
<svg class="a" style="left:433px;top:760px" width="16" height="16"><path d="M4.5 4.5l7 7M11.5 4.5l-7 7" stroke="#fff" stroke-width="2"/></svg>
<div class="a" style="left:594px;top:761px;width:16px;height:16px;background:#e6704e;border:1px solid #d05030;border-radius:2px"></div>
<svg class="a" style="left:594px;top:761px" width="16" height="16"><path d="M4.5 4.5l7 7M11.5 4.5l-7 7" stroke="#fff" stroke-width="2"/></svg>
<div class="t" style="left:3px;top:795px;font-size:13.1px">Preselected: Unnamed.Body.Sketch.Edge4 (32.923134 mm,-12.076864 mm,8.000000 µm)</div>
<div class="a" style="left:1287px;top:785px;width:1px;height:32px;background:#d8d8d8"></div>
<div class="a" style="left:1386px;top:785px;width:1px;height:32px;background:#d8d8d8"></div>
<svg class="a" style="left:1302px;top:791px" width="20" height="20"><path d="M15 4.5c-5-1-9 1-9 5M4 15.5c5 1 9-1 9-5" fill="none" stroke="#333" stroke-width="2.2"/><circle cx="16" cy="4.5" r="2.6" fill="#222"/><circle cx="3.8" cy="15.5" r="2.6" fill="#222"/></svg>
<div class="t" style="left:1324px;top:795px;letter-spacing:-0.4px;width:45px;overflow:hidden">Gesture</div>
<svg class="a" style="left:1367px;top:798px" width="10" height="6"><path d="M0.5 0.5h8l-4 4.5z" fill="#111"/></svg>
<div class="t" style="left:1391px;top:795px">467.36 mm x 222.55 mm</div>
</body></html>
